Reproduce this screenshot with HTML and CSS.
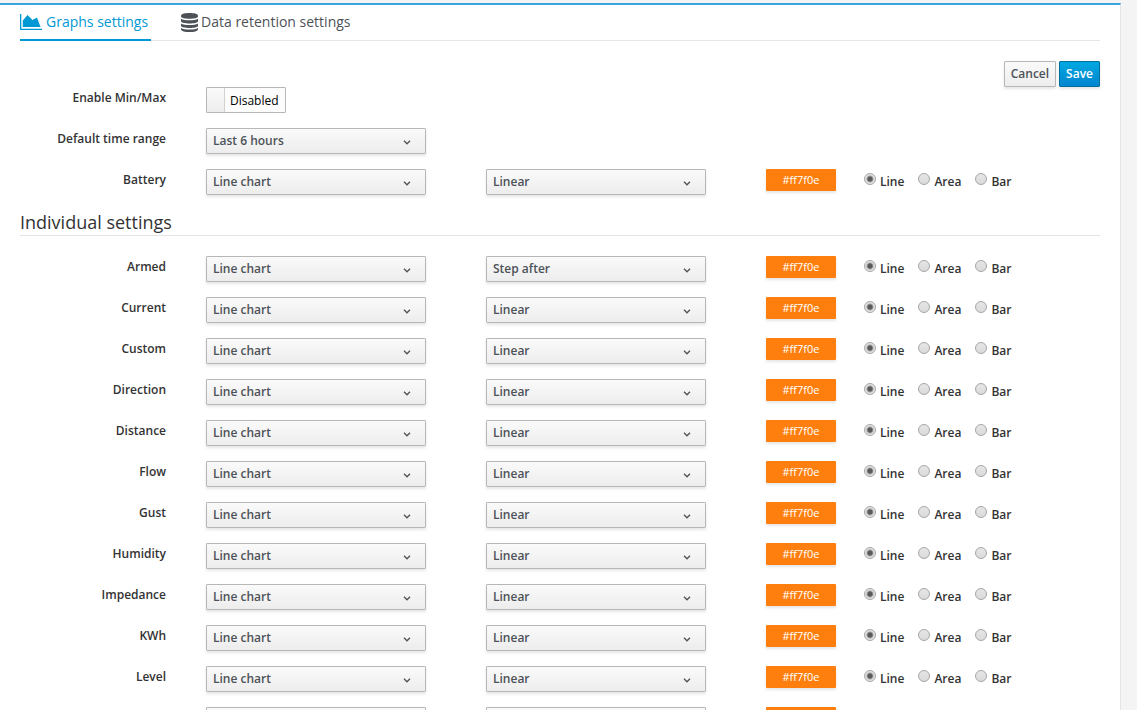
FILE: index.html
```
<!DOCTYPE html>
<html lang="en">
<head>
<meta charset="utf-8">
<meta name="viewport" content="width=device-width, initial-scale=1">
<title>Graphs settings</title>
<link rel="stylesheet" href="styles.css">
</head>
<body>
<main class="panel">
  <nav class="tabs">
    <a class="tab tab-active" href="#graphs">
      <svg class="tab-icon tab-icon-chart" viewBox="0 0 22 18" aria-hidden="true"><path d="M0 1h1.300v14.700H22V17H0z"/><path d="M2.800 14V7.500L7.500 2l5 5L17 4.500 20.500 14z"/></svg>
      <span>Graphs settings</span>
    </a>
    <a class="tab" href="#retention">
      <svg class="tab-icon tab-icon-data" viewBox="0 0 17 19" aria-hidden="true"><path d="M0 2.500C0-.8 17-.8 17 2.500v1C17 6.500 0 6.500 0 3.500z"/><path d="M0 5.800c3 2 14 2 17 0v2.400c0 3-17 3-17 0z"/><path d="M0 10.400c3 2 14 2 17 0v2.400c0 3-17 3-17 0z"/><path d="M0 15c3 2 14 2 17 0v1.400c0 3.400-17 3.400-17 0z"/></svg>
      <span>Data retention settings</span>
    </a>
  </nav>
  <form class="settings">
    <div class="actions">
      <button class="btn" type="button">Cancel</button>
      <button class="btn btn-primary" type="submit">Save</button>
    </div>
    <div class="row">
      <label class="row-label" for="minmax">Enable Min/Max</label>
      <div class="cell">
        <label class="switch"><input class="switch-input" id="minmax" type="checkbox"><span class="switch-handle"></span><span class="switch-text">Disabled</span></label>
      </div>
    </div>
    <div class="row">
      <label class="row-label" for="range">Default time range</label>
      <div class="cell">
        <div class="dropdown">
          <select class="select" id="range"><option>Last 6 hours</option></select>
          <svg class="chevron" viewBox="0 0 8 5" aria-hidden="true"><path d="M1 .8l3 3 3-3"/></svg>
        </div>
      </div>
    </div>
    <div id="general"></div>
    <h2 class="heading">Individual settings</h2>
    <div id="individual"></div>
  </form>
</main>
<script src="app.js"></script>
</body>
</html>
```
FILE: styles.css
```
* { box-sizing: border-box; }

body {
  margin: 0;
  padding: 3px 16px 0 0;
  height: 100vh;
  overflow: hidden;
  background: #f4f4f4;
  color: #333;
  font: 600 12px/22px "Open Sans", "Noto Sans", sans-serif;
}

.panel {
  min-height: 100%;
  padding: 0 20px;
  background: #fff;
  border-top: 2px solid #39a5dc;
  border-right: 1px solid #e4e4e4;
}

.tabs {
  display: flex;
  gap: 30px;
  height: 36px;
  border-bottom: 1px solid #e6e6e6;
  font-size: 14px;
  font-weight: 400;
}

.tab {
  display: flex;
  align-items: center;
  height: 36px;
  padding: 0 3px 2px 0;
  color: #4d5258;
  text-decoration: none;
}

.tab-active {
  padding-bottom: 0;
  border-bottom: 2px solid #0099d3;
  color: #0099d3;
}

.tab-icon { fill: currentColor; }
.tab-icon-chart { width: 22px; height: 18px; margin-right: 4px; }
.tab-icon-data { width: 17px; height: 19px; margin-right: 3px; }

.settings { padding-top: 20px; }

.actions {
  display: flex;
  justify-content: flex-end;
  gap: 3px;
}

.btn {
  height: 26px;
  padding: 0 6px;
  border: 1px solid #b7b7b7;
  border-radius: 1px;
  background: linear-gradient(#fafafa, #ededed);
  box-shadow: 0 2px 3px rgba(3, 3, 3, 0.1);
  color: #4d5258;
  font: inherit;
}

.btn-primary {
  border-color: #006e9c;
  background: linear-gradient(#00a8e1, #0085cf);
  color: #fff;
}

.row {
  display: grid;
  grid-template-columns: 166px 1fr 1fr 354px;
  min-height: 26px;
  margin-bottom: 15px;
}

.row-label {
  padding-right: 20px;
  text-align: right;
}

.cell { padding: 0 40px 0 20px; }

.dropdown { position: relative; }

.select {
  display: block;
  width: 100%;
  height: 26px;
  padding: 0 24px 0 6px;
  appearance: none;
  border: 1px solid #b7b7b7;
  border-radius: 1px;
  background: linear-gradient(#fafafa, #ededed);
  box-shadow: 0 2px 3px rgba(3, 3, 3, 0.1);
  color: #4d5258;
  font: inherit;
}

.chevron {
  position: absolute;
  top: 12px;
  right: 15px;
  width: 8px;
  height: 5px;
  fill: none;
  stroke: #4d5258;
  stroke-width: 1.3;
  pointer-events: none;
}

.switch {
  position: relative;
  display: flex;
  width: fit-content;
  height: 26px;
  border: 1px solid #b7b7b7;
  border-radius: 1px;
  background: #fcfcfc;
  color: #000;
  font-weight: 400;
  line-height: 26px;
}

.switch-input {
  position: absolute;
  opacity: 0;
}

.switch-handle {
  width: 18px;
  border-right: 1px solid #d1d1d1;
  background: linear-gradient(#fafafa, #ededed);
}

.switch-text { padding: 0 6px 0 5px; }

.series {
  display: flex;
  align-items: flex-start;
  padding-left: 20px;
}

.swatch {
  width: 70px;
  height: 22px;
  margin-right: 28px;
  padding: 0;
  border: 0;
  border-radius: 1px;
  background: #ff7f0e;
  box-shadow: 0 2px 3px rgba(3, 3, 3, 0.1);
  color: #fff;
  font: 400 11px/22px "Open Sans", "Noto Sans", sans-serif;
}

.radios {
  display: flex;
  gap: 14px;
}

.radio {
  display: flex;
  gap: 4px;
  line-height: 26px;
}

.radio-input {
  width: 12px;
  height: 12px;
  margin: 4px 0 0;
  appearance: none;
  border: 1px solid #a6a6a6;
  border-radius: 50%;
  background: linear-gradient(#e6e6e6, #dadada);
}

.radio-input:checked {
  background: radial-gradient(circle, #5a5a5a 0 2px, #e3e3e3 4px);
}

.heading {
  margin: 0 0 20px;
  padding-bottom: 1px;
  border-bottom: 1px solid #e4e4e4;
  font-size: 18px;
  font-weight: 400;
  line-height: 24px;
}
```
FILE: app.js
```
const SERIES = [
  ["Armed", "Step after"], ["Current", "Linear"], ["Custom", "Linear"],
  ["Direction", "Linear"], ["Distance", "Linear"], ["Flow", "Linear"],
  ["Gust", "Linear"], ["Humidity", "Linear"], ["Impedance", "Linear"],
  ["KWh", "Linear"], ["Level", "Linear"], ["Luminance", "Linear"]
];

function dropdown(id, label, value) {
  return `<div class="cell"><div class="dropdown">
    <select class="select" id="${id}" aria-label="${label}"><option>${value}</option></select>
    <svg class="chevron" viewBox="0 0 8 5" aria-hidden="true"><path d="M1 .8l3 3 3-3"/></svg>
  </div></div>`;
}

function row([name, curve]) {
  const id = name.toLowerCase();
  const radios = ["Line", "Area", "Bar"].map((type, i) =>
    `<label class="radio"><input class="radio-input" type="radio" name="${id}-type"${i ? "" : " checked"}><span>${type}</span></label>`
  ).join("");
  return `<div class="row">
    <label class="row-label" for="${id}">${name}</label>
    ${dropdown(id, name + " chart", "Line chart")}
    ${dropdown(id + "-curve", name + " interpolation", curve)}
    <div class="series"><button class="swatch" type="button">#ff7f0e</button><div class="radios">${radios}</div></div>
  </div>`;
}

document.getElementById("general").innerHTML = row(["Battery", "Linear"]);
document.getElementById("individual").innerHTML = SERIES.map(row).join("");
```
